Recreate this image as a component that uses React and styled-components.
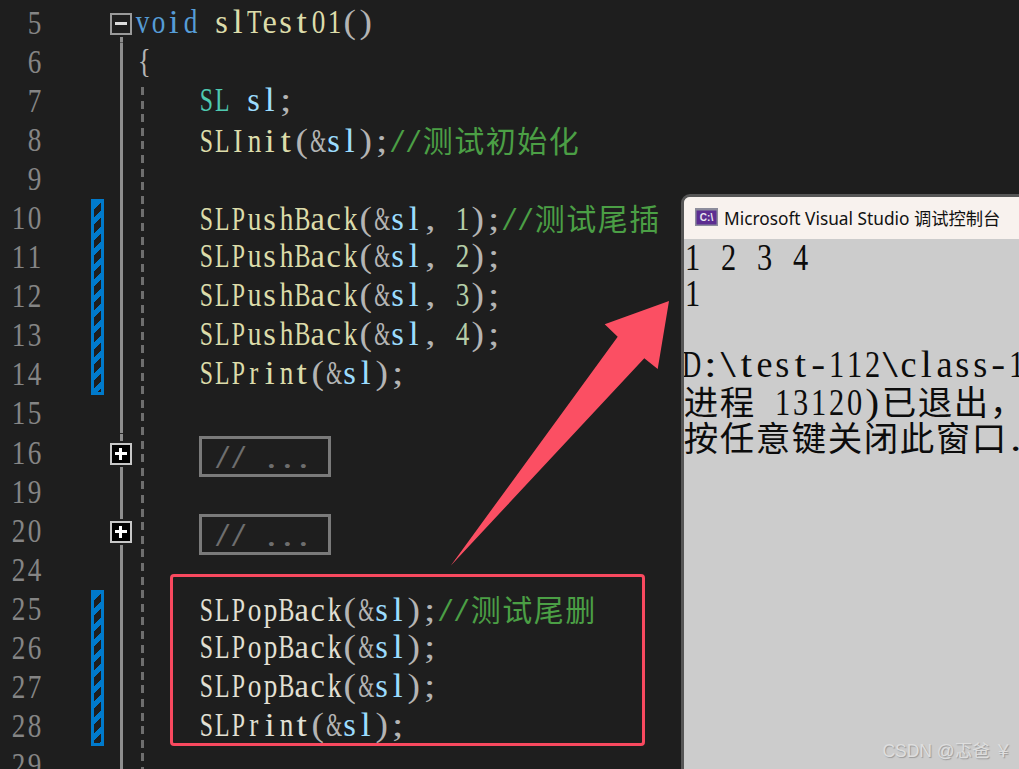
import React from "react";
import styled, { createGlobalStyle } from "styled-components";

const ROW = 39.1;

const GlobalStyle = createGlobalStyle`
  html, body {
    margin: 0;
    padding: 0;
    background: #1e1e1e;
    overflow: hidden;
  }
`;

const Page = styled.div`
  position: relative;
  width: 1019px;
  height: 769px;
  overflow: hidden;
  background: #1e1e1e;
  font-family: "Liberation Serif", "Noto Sans CJK SC", serif;
`;

const Editor = styled.div`
  display: flex;
  height: 100%;
  padding-top: 3.5px;
  box-sizing: border-box;
  font-size: 34px;
`;

// the source font is fixed pitch: narrow serif glyphs, each in a cell of its own
const Cell = styled.span`
  display: inline-flex;
  justify-content: center;
  width: ${(p) => p.$w}px;
  white-space: pre;
`;

const Glyph = styled.span`
  display: block;
  transform: scaleX(${(p) => p.$s});
`;

const HanCell = styled.span`
  display: inline-flex;
  justify-content: center;
  width: ${(p) => p.$w}px;
  font-family: "Noto Sans CJK SC", sans-serif;
  font-size: ${(p) => p.$size}px;
`;

const glyphScale = (c) => {
  if ("/\\".includes(c)) return 1.45;
  if (";:.,".includes(c)) return 1.2;
  if ("il".includes(c)) return 1.05;
  if ("t()-".includes(c)) return 1.1;
  if ("sace".includes(c)) return 0.95;
  if (c === "&") return 0.6;
  if ("BDLTPS".includes(c)) return 0.7;
  return 0.8;
};

const Mono = ({ text, w = 16 }) =>
  [...String(text)].map((c, i) => (
    <Cell key={i} $w={w}>
      <Glyph $s={glyphScale(c)}>{c}</Glyph>
    </Cell>
  ));

const LineNumbers = styled.div`
  width: 42px;
  flex: none;
  text-align: right;
  color: #858585;
`;

const LineNumber = styled.div`
  height: ${ROW}px;
  line-height: ${ROW - 1}px;
`;

const ChangeMargin = styled.div`
  width: 13px;
  margin-left: 49px;
  flex: none;
`;

const ChangeGap = styled.div`
  height: ${(p) => p.$rows * ROW}px;
`;

const ChangeBar = styled.div`
  height: ${(p) => p.$rows * ROW}px;
  padding: 3px;
  box-sizing: border-box;
  background: #007acc;
`;

const ChangeStripes = styled.div`
  height: 100%;
  background: repeating-linear-gradient(
    135deg,
    #007acc 0,
    #007acc 5px,
    #1e1e1e 5px,
    #1e1e1e 11px
  );
`;

const FoldMargin = styled.div`
  width: 28px;
  margin-left: 3px;
  flex: none;
`;

const FoldCell = styled.div`
  display: flex;
  align-items: center;
  justify-content: center;
  height: ${ROW}px;
  background: linear-gradient(#8e8e8e, #8e8e8e) no-repeat center bottom;
  background-size: 3px ${(p) => (p.$first ? "50%" : "100%")};
`;

const FoldBox = styled.div`
  position: relative;
  width: 22px;
  height: 22px;
  box-sizing: border-box;
  border: 2px solid ${(p) => (p.$open ? "#9a9a9a" : "#c8c8c8")};
  background: ${(p) => (p.$open ? "#1e1e1e" : "#000")};
  box-shadow: 0 0 0 2px #1e1e1e;
  top: 1px;

  &::before,
  &::after {
    content: "";
    position: absolute;
    background: #fff;
  }
  &::before {
    left: 3px;
    right: 3px;
    top: 7px;
    height: 3px;
    ${(p) => (p.$open ? "background: #dcdcdc;" : "")}
  }
  &::after {
    display: ${(p) => (p.$open ? "none" : "block")};
    top: 3px;
    bottom: 3px;
    left: 7px;
    width: 3px;
  }
`;

const CodeColumn = styled.div`
  position: relative;
  flex: 1;
  margin-left: -1px;
  white-space: pre;

  &::before {
    content: "";
    position: absolute;
    left: 7px;
    top: 83px;
    bottom: 0;
    width: 3px;
    background: repeating-linear-gradient(
      #6e6e6e 0,
      #6e6e6e 8px,
      transparent 8px,
      transparent 13.6px
    );
  }
`;

const CodeLine = styled.div`
  height: ${ROW}px;
  line-height: ${ROW - 2.5}px;
  color: #dcdcdc;
`;

const COLORS = {
  keyword: "#569cd6",
  func: "#dcdcaa",
  plain: "#e2e0d4",
  type: "#4ec9b0",
  param: "#9cdcfe",
  punct: "#b4b4b4",
  num: "#b5cea8",
  comment: "#4b9f45",
};

const TokSpan = styled.span`
  color: ${(p) => COLORS[p.$k]};
`;

const Tok = ({ k, children }) => (
  <TokSpan $k={k}>
    <Mono text={children} />
  </TokSpan>
);

const Brace = styled.span`
  display: inline-block;
  margin-left: 2px;
`;

const Collapsed = styled.span`
  display: inline-block;
  box-sizing: border-box;
  width: 132px;
  height: 41px;
  margin: 2.5px 0 0 65px;
  padding-left: 13px;
  border: 3px solid #7a7a7a;
  line-height: 36px;
  color: #6e6e6e;
  vertical-align: top;
`;

const Indent = <Mono text="    " />;

const pushBack = (n, comment) => (
  <>
    {Indent}
    <Tok k="func">SLPushBack</Tok>
    <Tok k="punct">(&amp;</Tok>
    <Tok k="param">sl</Tok>
    <Tok k="punct">, </Tok>
    <Tok k="num">{n}</Tok>
    <Tok k="punct">);</Tok>
    {comment}
  </>
);

const popBack = (comment) => (
  <>
    {Indent}
    <Tok k="plain">SLPopBack</Tok>
    <Tok k="punct">(&amp;</Tok>
    <Tok k="param">sl</Tok>
    <Tok k="punct">);</Tok>
    {comment}
  </>
);

const print = (kind) => (
  <>
    {Indent}
    <Tok k={kind}>SLPrint</Tok>
    <Tok k="punct">(&amp;</Tok>
    <Tok k="param">sl</Tok>
    <Tok k="punct">);</Tok>
  </>
);

const note = (text) => (
  <TokSpan $k="comment">
    <Mono text="//" />
    {[...text].map((c, i) => (
      <HanCell key={i} $w={31.5} $size={30}>
        {c}
      </HanCell>
    ))}
  </TokSpan>
);

const rows = [
  {
    no: 5,
    fold: "open",
    code: (
      <>
        <Tok k="keyword">void</Tok>
        <Mono text=" " />
        <Tok k="func">slTest01</Tok>
        <Tok k="punct">()</Tok>
      </>
    ),
  },
  {
    no: 6,
    code: (
      <Brace>
        <Tok k="punct">{"{"}</Tok>
      </Brace>
    ),
  },
  {
    no: 7,
    code: (
      <>
        {Indent}
        <Tok k="type">SL</Tok>
        <Mono text=" " />
        <Tok k="param">sl</Tok>
        <Tok k="punct">;</Tok>
      </>
    ),
  },
  {
    no: 8,
    code: (
      <>
        {Indent}
        <Tok k="func">SLInit</Tok>
        <Tok k="punct">(&amp;</Tok>
        <Tok k="param">sl</Tok>
        <Tok k="punct">);</Tok>
        {note("测试初始化")}
      </>
    ),
  },
  { no: 9 },
  { no: 10, code: pushBack(1, note("测试尾插")) },
  { no: 11, code: pushBack(2) },
  { no: 12, code: pushBack(3) },
  { no: 13, code: pushBack(4) },
  { no: 14, code: print("func") },
  { no: 15 },
  { no: 16, fold: "closed", collapsed: true },
  { no: 19 },
  { no: 20, fold: "closed", collapsed: true },
  { no: 24 },
  { no: 25, code: popBack(note("测试尾删")) },
  { no: 26, code: popBack() },
  { no: 27, code: popBack() },
  { no: 28, code: print("plain") },
  { no: 29 },
];

const ConsoleWindow = styled.div`
  position: absolute;
  left: 681px;
  top: 194px;
  width: 400px;
  height: 640px;
  box-sizing: border-box;
  border: 3px solid #565656;
  border-radius: 9px 0 0 0;
  overflow: hidden;
  background: #cccccc;
`;

const ConsoleTitle = styled.div`
  display: flex;
  align-items: center;
  gap: 6px;
  height: 42px;
  padding: 0 0 2px 11px;
  box-sizing: border-box;
  background: #f8f2ee;
  color: #111;
  font-family: "Noto Sans", "Noto Sans CJK SC", sans-serif;
  font-size: 17.3px;
  white-space: nowrap;
`;

const ConsoleIcon = styled.svg`
  width: 23px;
  height: 18px;
  flex: none;
`;

const ConsoleBody = styled.div`
  margin-left: -1px;
  padding-top: 1px;
  color: #0c0c0c;
  font-size: 38px;
  white-space: pre;
`;

const ConsoleLine = styled.div`
  height: 35.8px;
  line-height: 35.8px;
`;

const han = (text) =>
  [...text].map((c, i) => (
    <HanCell key={i} $w={36} $size={34.5}>
      {c}
    </HanCell>
  ));

const Arrow = styled.svg`
  position: absolute;
  left: 0;
  top: 0;
  width: 1019px;
  height: 769px;
  pointer-events: none;
`;

const Highlight = styled.div`
  position: absolute;
  left: 170px;
  top: 574px;
  width: 475px;
  height: 172px;
  box-sizing: border-box;
  border: 3px solid #f9495f;
  border-radius: 4px;
`;

const Watermark = styled.div`
  position: absolute;
  right: 7px;
  bottom: 8px;
  color: #dedede;
  font-family: "Liberation Sans", "Noto Sans CJK SC", sans-serif;
  font-size: 17.5px;
  line-height: 20px;
  text-shadow: 1px 1px 1px #9a9a9a;
`;

export default function App() {
  return (
    <Page>
      <GlobalStyle />
      <Editor>
        <LineNumbers>
          {rows.map((r) => (
            <LineNumber key={r.no}>
              <Mono text={r.no} />
            </LineNumber>
          ))}
        </LineNumbers>
        <ChangeMargin>
          <ChangeGap $rows={5} />
          <ChangeBar $rows={5}>
            <ChangeStripes />
          </ChangeBar>
          <ChangeGap $rows={5} />
          <ChangeBar $rows={4}>
            <ChangeStripes />
          </ChangeBar>
        </ChangeMargin>
        <FoldMargin>
          {rows.map((r, i) => (
            <FoldCell key={r.no} $first={i === 0}>
              {r.fold && <FoldBox $open={r.fold === "open"} />}
            </FoldCell>
          ))}
        </FoldMargin>
        <CodeColumn>
          {rows.map((r) => (
            <CodeLine key={r.no}>
              {r.collapsed ? (
                <Collapsed>
                  <Mono text="// ..." />
                </Collapsed>
              ) : (
                r.code
              )}
            </CodeLine>
          ))}
        </CodeColumn>
      </Editor>

      <Highlight />
      <Arrow viewBox="0 0 1019 769">
        <polygon
          points="669,301 604.7,324.3 617.7,336.7 450.7,565.7 644.3,358.3 657.7,369"
          fill="#fb4f63"
        />
      </Arrow>

      <ConsoleWindow>
        <ConsoleTitle>
          <ConsoleIcon viewBox="0 0 23 18">
            <rect width="23" height="18" fill="#8c8c9c" />
            <rect x="1.5" y="2.5" width="20" height="14" fill="#5c2d91" />
            <text
              x="11.5"
              y="13"
              textAnchor="middle"
              fontSize="10"
              fontWeight="700"
              fill="#e8e8f0"
              fontFamily="Liberation Sans"
            >
              C:\
            </text>
          </ConsoleIcon>
          Microsoft Visual Studio 调试控制台
        </ConsoleTitle>
        <ConsoleBody>
          <ConsoleLine>
            <Mono text="1 2 3 4" w={18} />
          </ConsoleLine>
          <ConsoleLine>
            <Mono text="1" w={18} />
          </ConsoleLine>
          <ConsoleLine />
          <ConsoleLine>
            <Mono text="D:\test-112\class-1" w={18} />
          </ConsoleLine>
          <ConsoleLine>
            {han("进程")}
            <Mono text=" 13120)" w={18} />
            {han("已退出，")}
          </ConsoleLine>
          <ConsoleLine>
            {han("按任意键关闭此窗口")}
            <Mono text="." w={18} />
          </ConsoleLine>
        </ConsoleBody>
      </ConsoleWindow>

      <Watermark>CSDN @忑爸 ￥</Watermark>
    </Page>
  );
}
